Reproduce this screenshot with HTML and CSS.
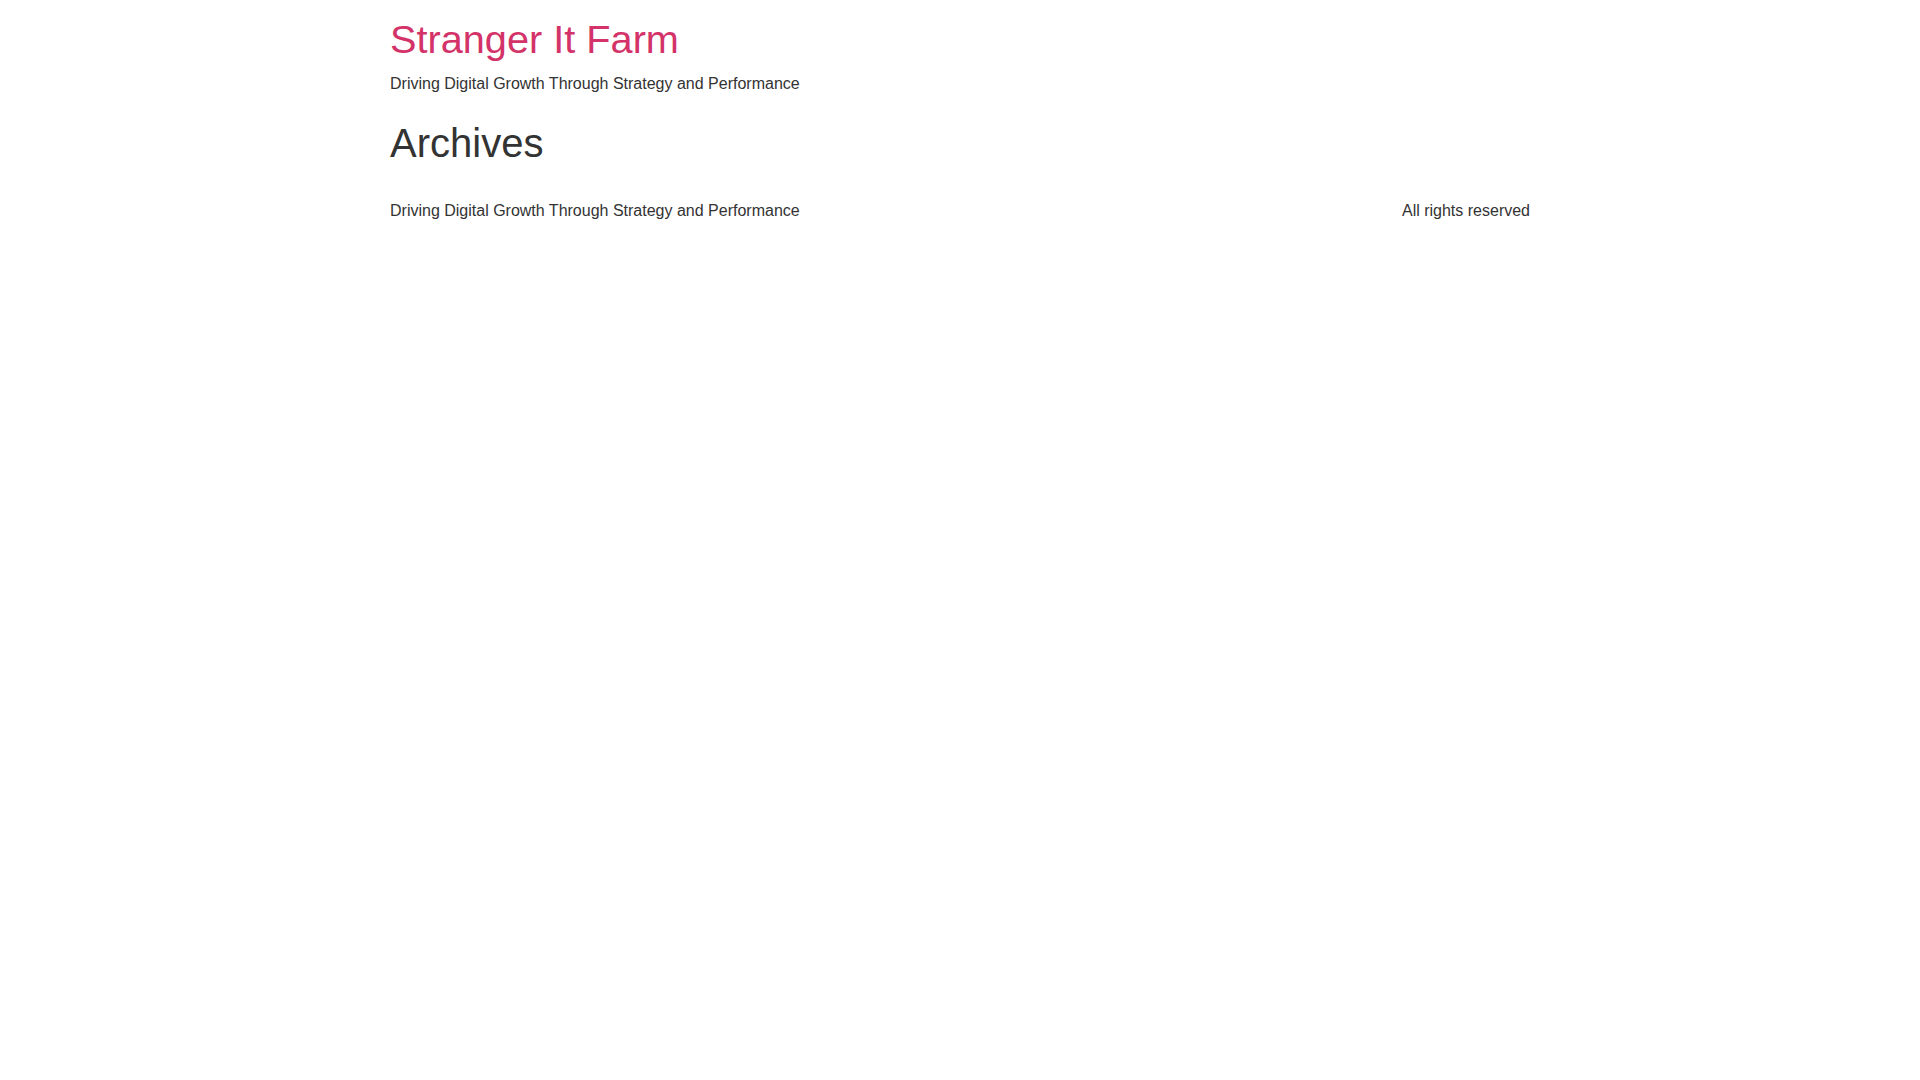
FILE: index.html
```html
<!DOCTYPE html>
<html lang="en">
<head>
    <meta charset="UTF-8">
    <meta name="viewport" content="width=device-width, initial-scale=1.0">
    <title>Archives - Stranger It Farm</title>
    <link rel="stylesheet" href="styles.css">
</head>
<body>
    <header class="site-header">
        <div class="container">
            <a href="/" class="site-title">Stranger It Farm</a>
            <p class="site-description">Driving Digital Growth Through Strategy and Performance</p>
        </div>
    </header>
    <main class="container">
        <h1 class="page-title">Archives</h1>
    </main>
    <footer class="site-footer">
        <div class="container footer-row">
            <div>Driving Digital Growth Through Strategy and Performance</div>
            <div>All rights reserved</div>
        </div>
    </footer>
</body>
</html>
```
FILE: styles.css
```css
body {
    font-family: 'Liberation Sans', Arial, sans-serif;
    font-size: 16px;
    line-height: 1.5;
    color: #333;
    background: #fff;
    margin: 0;
}

.container {
    width: 1140px;
    margin: 0 auto;
}

.site-header {
    padding-top: 16px;
}

.site-title {
    display: block;
    font-size: 39.7px;
    line-height: 1.2;
    color: #d33368;
    text-decoration: none;
}

.site-description {
    margin: 8.5px 0 0;
}

.page-title {
    font-size: 40px;
    font-weight: 400;
    line-height: 1.2;
    margin: 23px 0 0;
}

.site-footer {
    margin-top: 32px;
}

.footer-row {
    display: flex;
    justify-content: space-between;
}
```
